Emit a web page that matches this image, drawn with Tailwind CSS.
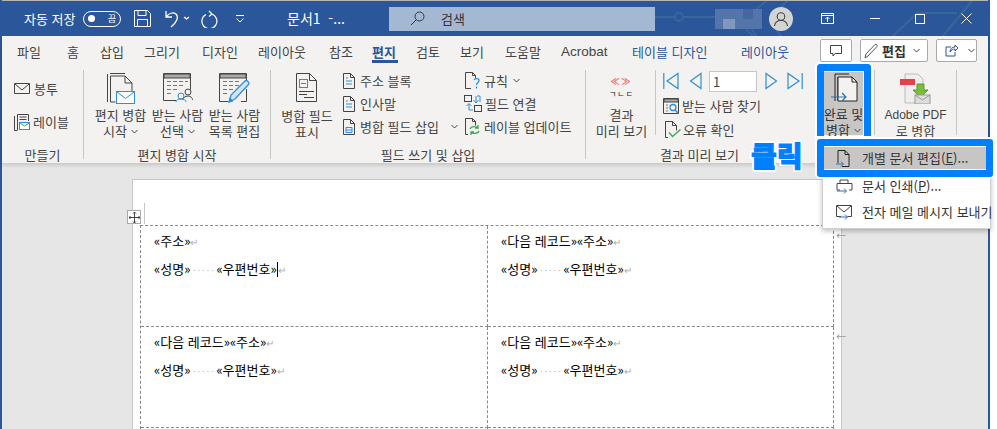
<!DOCTYPE html>
<html lang="ko">
<head>
  <meta charset="UTF-8" />
  <title>문서1 - Word</title>
  <script src="https://cdn.jsdelivr.net/npm/@tailwindcss/browser@4"></script>
</head>
<body class="bg-white text-[#444] font-['Noto_Sans_CJK_KR','Liberation_Sans',sans-serif]">
<div class="w-[997px] h-[429px] overflow-hidden">
<div class="relative w-[990px] h-[429px] bg-[#e6e6e6] border-x-2 border-x-[#2b579a]">

  <!-- title bar -->
  <div class="relative flex items-center h-[36px] bg-[#2b579a] border-t border-t-[#b5b5b5] text-white text-[13px] overflow-hidden">
    <svg class="absolute left-[640px] top-0" width="346" height="36" viewBox="0 0 346 36" fill="none" stroke="#3a659f" stroke-width="2"><path d="M0 16h32M42 16h50L112 36M125 0c-20 12-20 24-10 36M145 0c-14 12-14 24-6 36M250 36l25-24h40M330 0l-30 36"/><circle cx="37" cy="16" r="4"/></svg>
    <span class="relative ml-[22px] w-[52px] whitespace-nowrap">자동 저장</span>
    <div class="relative ml-[7px] w-[38px] h-[16px] rounded-full border border-white flex items-center justify-between px-[4px]">
      <span class="w-[7px] h-[7px] rounded-full bg-white"></span><span class="text-[9px]">끔</span>
    </div>
    <svg class="relative ml-[13px]" width="17" height="17" viewBox="0 0 17 17" fill="none" stroke="white"><path d="M.5.5h13l3 3v13H.5zM4 .5v5h8v-5M3.500 16.500v-7h10v7"/></svg>
    <svg class="relative ml-[13px]" width="26" height="18" viewBox="0 0 26 18" fill="none" stroke="white" stroke-width="1.300"><path d="M2 1v6h6M2 7c3-4 7-5 10-3 3 3 1 8-5 13"/><path d="M20 7l2.500 2 2.500-2"/></svg>
    <svg class="relative ml-[11px]" width="18" height="18" viewBox="0 0 18 18" fill="none" stroke="white" stroke-width="1.200"><path d="M8 1l3 3-3 2.500M10.500 4A7.500 7.500 0 1 1 5 4.500"/></svg>
    <svg class="relative ml-[16px]" width="10" height="8" viewBox="0 0 10 8" fill="none" stroke="white"><path d="M1 .5h8M1.500 3.500L5 7l3.500-3.500"/></svg>
    <span class="relative ml-[42px] text-[14px] w-[102px] whitespace-nowrap">문서1&nbsp; -...</span>
    <div class="relative w-[266px] h-[24px] bg-[#a5b8d3] flex items-center text-[#333] text-[13px]">
      <svg class="ml-[21px]" width="15" height="15" viewBox="0 0 15 15" fill="none" stroke="#333"><circle cx="9.500" cy="5.500" r="4.500"/><path d="M6 9l-5 5"/></svg>
      <span class="ml-[16px]">검색</span>
    </div>
    <div class="relative ml-[60px] w-[47px] h-[20px] bg-[#5375a9] flex">
      <span class="w-[12px] h-[10px] mt-[10px] ml-[8px] bg-[#7f98bf]"></span>
      <span class="w-[10px] h-[10px] ml-[8px] bg-[#46689e]"></span>
    </div>
    <div class="relative ml-[7px] w-[24px] h-[24px] rounded-full bg-[#d4d4d4] flex items-center justify-center">
      <svg width="16" height="16" viewBox="0 0 16 16" fill="none" stroke="#444" stroke-width="1.100"><circle cx="8" cy="5.500" r="3.800"/><path d="M1.500 15c.5-4 3-5.500 6.500-5.500s6 1.500 6.500 5.500"/></svg>
    </div>
    <svg class="relative ml-[28px]" width="13" height="11" viewBox="0 0 13 11" fill="none" stroke="white"><path d="M.5.500h12v10H.5zM.5 2.500h12M6.500 9V4.500M4.500 6l2-2 2 2"/></svg>
    <span class="relative ml-[36px] w-[10px] h-px bg-white"></span>
    <span class="relative ml-[35px] w-[10px] h-[10px] border border-white"></span>
    <svg class="relative ml-[36px]" width="11" height="11" viewBox="0 0 11 11" stroke="white"><path d="M.5.500l10 10M10.500.500l-10 10"/></svg>
  </div>

  <div class="bg-[#f3f2f1] h-[127px] shadow-[0_2px_4px_rgba(0,0,0,0.15)]">
    <!-- tabs -->
    <div class="flex items-start h-[26px] text-[13px] text-[#444] pl-[15px] leading-[32px] whitespace-nowrap">
      <span class="w-[50px]">파일</span>
      <span class="w-[33px]">홈</span>
      <span class="w-[44px]">삽입</span>
      <span class="w-[58px]">그리기</span>
      <span class="w-[56px]">디자인</span>
      <span class="w-[71px]">레이아웃</span>
      <span class="w-[43px]">참조</span>
      <span class="w-[44px] font-bold text-[#2b579a] relative">편지<i class="absolute left-0 top-[24px] w-[26px] h-[3px] bg-[#2b579a]"></i></span>
      <span class="w-[44px]">검토</span>
      <span class="w-[45px]">보기</span>
      <span class="w-[56px]">도움말</span>
      <span class="w-[71px] font-['Liberation_Sans',sans-serif] text-[13.500px]">Acrobat</span>
      <span class="w-[109px] text-[#2b579a]">테이블 디자인</span>
      <span class="w-[79px] text-[#2b579a]">레이아웃</span>
      <div class="flex items-center gap-[8px] mt-[3px] leading-none">
        <span class="w-[32px] h-[23px] bg-white border border-[#aaa] rounded-[2px] flex items-center justify-center">
          <svg width="12" height="12" viewBox="0 0 12 12" fill="none" stroke="#444"><path d="M.5.500h11v8H5l-2 2.500V8.500H.5z"/></svg>
        </span>
        <span class="w-[68px] h-[23px] bg-white border border-[#aaa] rounded-[2px] flex items-center gap-[2px] pl-[3px] font-bold text-[#333]">
          <svg width="16" height="16" viewBox="0 0 16 16" fill="none" stroke="#555"><path d="M1 15l1-4 9-9.500c1-1 3 1 2 2L4 13z"/></svg>편집
          <svg class="ml-[5px]" width="7" height="5" viewBox="0 0 7 5" fill="none" stroke="#444"><path d="M.5 1l3 3 3-3"/></svg>
        </span>
        <span class="w-[41px] h-[23px] bg-white border border-[#aaa] rounded-[2px] flex items-center pl-[8px] gap-[10px]">
          <svg width="13" height="13" viewBox="0 0 13 13" fill="none" stroke="#2b579a"><path d="M6 3H1v9h9V8M5 8c0-3 2-5 5-5V1l3 3-3 3V5C8 5 6 6 5 8z"/></svg>
          <svg width="7" height="5" viewBox="0 0 7 5" fill="none" stroke="#444"><path d="M.5 1l3 3 3-3"/></svg>
        </span>
      </div>
    </div>

    <!-- ribbon -->
    <div class="flex h-[101px] text-[13px] leading-[16px] text-[#444] whitespace-nowrap">

      <!-- 만들기 -->
      <div class="w-[82px] flex flex-col border-r border-r-[#c8c6c4] mt-[8px] mb-[4px]">
        <div class="flex-1 flex flex-col pl-[12px] pt-[9px] gap-[13px]">
          <div class="flex items-center gap-[3px] h-[20px]">
            <svg width="17" height="12" viewBox="0 0 17 12" fill="none" stroke="#444"><path d="M.5.500h15v10H.5zM1 1l7 6 7-6"/></svg>봉투
          </div>
          <div class="flex items-center gap-[3px] h-[20px]">
            <svg width="16" height="17" viewBox="0 0 16 17" fill="none" stroke="#444"><path d="M3.500 16V.5h11V7M.5 2v14.500h3M5.500 3h7M5.500 5.500h7"/><rect x="5.500" y="8.500" width="10" height="7" fill="#fff" stroke="#2e8fd6"/><path d="M6 9l4.500 3L15 9" stroke="#2e8fd6"/></svg>레이블
          </div>
        </div>
        <div class="h-[8px] leading-[8px] text-center">만들기</div>
      </div>

      <!-- 편지 병합 시작 -->
      <div class="w-[187px] flex flex-col border-r border-r-[#c8c6c4] mt-[8px] mb-[4px]">
        <div class="flex-1 flex pl-[8px]">
          <div class="w-[57px] flex flex-col items-center pt-[3px]">
            <svg class="shrink-0" width="28" height="31" viewBox="0 0 28 31" fill="none" stroke="#444"><path d="M.5 1v28M3 .5h15M3.500 3v26h5M3.500 3H18l7 7v8"/><path d="M18 3v7h7"/><rect x="9.500" y="18.500" width="18" height="12" fill="#fff" stroke="#2e8fd6"/><path d="M10 19l8.500 6.500L27 19" stroke="#2e8fd6"/></svg>
            <span class="mt-[3px]">편지 병합</span>
            <span class="flex items-center gap-[4px]">시작<svg width="7" height="5" viewBox="0 0 7 5" fill="none" stroke="#444"><path d="M.5 1l3 3 3-3"/></svg></span>
          </div>
          <div class="w-[57px] flex flex-col items-center pt-[3px]">
            <svg class="shrink-0" width="30" height="29" viewBox="0 0 30 29" fill="none" stroke="#444"><path d="M13 27.500H.5V.5h27v16"/><path d="M1 1h26v4H1z" fill="#aaa" stroke="#444"/><path d="M4 8.500h4M10 8.500h4M16 8.500h4M22 8.500h3M4 12.500h4M10 12.500h4M16 12.500h4M4 16.500h4M10 16.500h4M4 20.500h4" stroke="#777"/><circle cx="25" cy="19" r="3"/><path d="M20 27c0-2 2-4 5-4s4 2 5 4"/><circle cx="18" cy="23" r="3" stroke="#2e8fd6"/><path d="M13 29c0-2 2-3 5-3s5 1 5 3" stroke="#2e8fd6"/></svg>
            <span class="mt-[5px]">받는 사람</span>
            <span class="flex items-center gap-[4px]">선택<svg width="7" height="5" viewBox="0 0 7 5" fill="none" stroke="#444"><path d="M.5 1l3 3 3-3"/></svg></span>
          </div>
          <div class="w-[57px] flex flex-col items-center pt-[3px]">
            <svg class="shrink-0" width="31" height="30" viewBox="0 0 31 30" fill="none" stroke="#444"><path d="M9 28.500H.5V.5h27v8M27.500 16v12.500H22"/><path d="M1 1h26v4H1z" fill="#aaa" stroke="#444"/><path d="M4 8.500h4M10 8.500h4M16 8.500h4M4 12.500h4M10 12.500h4M16 12.500h4M4 16.500h4M10 16.500h4M4 20.500h4" stroke="#777"/><path d="M10 29l2-7L26 8c1.500-1.500 5 1.500 3.500 3.500L16 26z" fill="#cfe4f5" stroke="#2e8fd6" stroke-width="1.300"/><path d="M10 29l1-4 3 3z" fill="#2e8fd6" stroke="#2e8fd6"/></svg>
            <span class="mt-[4px]">받는 사람</span><span>목록 편집</span>
          </div>
        </div>
        <div class="h-[8px] leading-[8px] text-center">편지 병합 시작</div>
      </div>

      <!-- 필드 쓰기 및 삽입 -->
      <div class="w-[315px] flex flex-col border-r border-r-[#c8c6c4] mt-[8px] mb-[4px]">
        <div class="flex-1 flex">
          <div class="w-[72px] flex flex-col items-center pt-[3px]">
            <svg class="shrink-0" width="22" height="29" viewBox="0 0 22 29" fill="none" stroke="#444"><path d="M.5.500h13l7 7v21H.5zM13.500.5v7h7"/><rect x="3.500" y="6.500" width="8" height="8" stroke="#2e8fd6"/><path d="M5 10.500h5" stroke="#2e8fd6"/><path d="M3 18.500h15M3 21.500h8M8 24.500h10"/></svg>
            <span class="mt-[6px]">병합 필드</span><span>표시</span>
          </div>
          <div class="flex flex-col w-[122px] pt-[1px] gap-[4px]">
            <div class="flex items-center h-[19px] gap-[5px]">
              <svg width="12" height="16" viewBox="0 0 12 16" fill="none" stroke="#444"><path d="M.5.500h7l4 4v11H.5zM7.500.5v4h4"/><path d="M3 5h2M3 8h6M3 11h6" stroke="#2e8fd6"/></svg>주소 블록
            </div>
            <div class="flex items-center h-[19px] gap-[5px]">
              <svg width="12" height="16" viewBox="0 0 12 16" fill="none" stroke="#444"><path d="M.5.500h7l4 4v11H.5zM7.500.5v4h4"/><path d="M3 5h2M3 8h6M3 11h6" stroke="#2e8fd6"/></svg>인사말
            </div>
            <div class="flex items-center h-[19px] gap-[5px]">
              <svg width="12" height="16" viewBox="0 0 12 16" fill="none" stroke="#444"><path d="M.5.500h7l4 4v11H.5zM7.500.5v4h4"/><path d="M3 8.500h6v5H3zM3 11h6" stroke="#2e8fd6"/></svg>병합 필드 삽입
              <svg class="ml-[7px]" width="7" height="5" viewBox="0 0 7 5" fill="none" stroke="#444"><path d="M.5 1l3 3 3-3"/></svg>
            </div>
          </div>
          <div class="flex flex-col pt-[1px] gap-[4px]">
            <div class="flex items-center h-[19px] gap-[3px]">
              <svg width="16" height="17" viewBox="0 0 16 17" fill="none" stroke="#444"><path d="M6 16.500H.5V.5h7l3 3v3"/><path d="M7.500.5v3h3"/><path d="M9 8c1-2 5-2 5 .5 0 2-2.500 2-2.500 4.500M11.500 14.500v2" stroke="#2e8fd6" stroke-width="1.300"/></svg>규칙
              <svg class="ml-[2px]" width="7" height="5" viewBox="0 0 7 5" fill="none" stroke="#444"><path d="M.5 1l3 3 3-3"/></svg>
            </div>
            <div class="flex items-center h-[19px] gap-[3px] -ml-[1px]">
              <svg width="18" height="17" viewBox="0 0 18 17" fill="none" stroke="#444"><rect x=".5" y=".5" width="7" height="6"/><rect x="10.500" y="10.500" width="7" height="6"/><path d="M12 1v6M9.500 5l2.500 3 2.500-3M13 1h3v6M5 15V9M2.500 11L5 8.500 7.500 11M5 15h4" stroke="#2e8fd6"/></svg>필드 연결
            </div>
            <div class="flex items-center h-[19px] gap-[3px]">
              <svg width="16" height="17" viewBox="0 0 16 17" fill="none" stroke="#444"><path d="M3 16.500H.5V.5h7l3 3v4"/><path d="M7.500.5v3h3"/><path d="M5 11c1-3 6-3 8-1M13 7v3h-3M14 13c-1 3-6 3-8 1M6 17v-3h3" stroke="#3aa655" stroke-width="1.300"/></svg>레이블 업데이트
            </div>
          </div>
        </div>
        <div class="h-[8px] leading-[8px] text-center">필드 쓰기 및 삽입</div>
      </div>

      <!-- 결과 미리 보기 -->
      <div class="w-[238px] flex flex-col mt-[8px] mb-[4px]">
        <div class="flex flex-1">
          <div class="w-[70px] h-[65px] flex flex-col items-center pl-[2px] pt-[6px] border-r border-r-[#c8c6c4]">
            <span class="text-[9px] leading-[12px] text-[#e55] font-bold tracking-[2px]">≪≫</span>
            <span class="text-[8px] leading-[12px] tracking-[1px] text-[#222]">ㄱㄴㄷ</span>
            <span class="mt-[7px]">결과</span><span>미리 보기</span>
          </div>
          <div class="flex flex-col pl-[7px]">
            <div class="flex items-center h-[22px]">
              <svg width="16" height="18" viewBox="0 0 16 18" fill="none" stroke="#2e8fd6" stroke-width="1.200"><path d="M.8 1v16M15 1.500v15L4 9z"/></svg>
              <svg class="ml-[10px]" width="13" height="18" viewBox="0 0 13 18" fill="none" stroke="#2e8fd6" stroke-width="1.200"><path d="M12 1.500v15L1.500 9z"/></svg>
              <span class="ml-[7px] w-[48px] h-[21px] bg-white border border-[#c8c6c4] pl-[3px] text-[13px] leading-[19px]">1</span>
              <svg class="ml-[8px]" width="13" height="18" viewBox="0 0 13 18" fill="none" stroke="#2e8fd6" stroke-width="1.200"><path d="M1 1.500v15L11.500 9z"/></svg>
              <svg class="ml-[9px]" width="16" height="18" viewBox="0 0 16 18" fill="none" stroke="#2e8fd6" stroke-width="1.200"><path d="M15.200 1v16M1 1.500v15L12 9z"/></svg>
            </div>
            <div class="flex items-center h-[19px] gap-[3px] mt-[4px]">
              <svg width="16" height="16" viewBox="0 0 16 16" fill="none" stroke="#444"><path d="M.5 15.500V.5h15v15z"/><path d="M1 1h14v3H1z" fill="#aaa"/><path d="M3 7h2M3 10h2M3 13h2" stroke="#777"/><circle cx="10" cy="9.500" r="3" stroke="#2e8fd6" stroke-width="1.300"/><path d="M12 12l3 3" stroke="#2e8fd6" stroke-width="1.500"/></svg>받는 사람 찾기
            </div>
            <div class="flex items-center h-[19px] gap-[2px] mt-[5px] ml-[2px]">
              <svg width="16" height="17" viewBox="0 0 16 17" fill="none" stroke="#444"><path d="M3 16.500H.5V.5h7l4 4v5"/><path d="M7.500.5v4h4"/><path d="M4 11.500l3.500 4 8-7" stroke="#3aa655" stroke-width="1.300"/></svg>오류 확인
            </div>
          </div>
        </div>
        <div class="h-[8px] leading-[8px] pl-[74px]">결과 미리 보기</div>
      </div>

      <!-- 완료 및 병합 -->
      <div class="w-[39px] mt-[10px] pt-[1px] bg-[#c8c6c4] h-[63px] flex flex-col items-center text-[#333]">
        <svg class="shrink-0" width="28" height="29" viewBox="0 0 28 29" fill="none" stroke="#222"><path d="M5 28V1h14M8 4v24"/><path d="M8 4h14l5 5v19H8z" fill="#f3f2f1"/><path d="M22 4v5h5"/><path d="M1 24h15M12 20l4 4-4 4" stroke="#2e6fb0" stroke-width="1.200"/></svg>
        <span class="mt-[4px]">완료 및</span>
        <span class="flex items-center gap-[4px]">병합<svg width="7" height="5" viewBox="0 0 7 5" fill="none" stroke="#444"><path d="M.5 1l3 3 3-3"/></svg></span>
      </div>

      <!-- Adobe PDF -->
      <div class="w-[83px] h-[65px] mt-[8px] ml-[11px] flex flex-col items-center pt-[3px] border-x border-x-[#c8c6c4]">
        <svg class="shrink-0" width="32" height="31" viewBox="0 0 32 31" fill="none"><path d="M5 1h13l5 5v24H5z" fill="#eee" stroke="#bbb"/><rect x="0" y="6" width="15" height="6" fill="#e8404a"/><path d="M17 11h7v6h4l-7.500 8L13 17h4z" fill="#7dbb3c" stroke="#5f9a2b"/><rect x="15" y="22" width="15" height="9" fill="#ddd" stroke="#999"/><path d="M15 22l7.500 5L30 22" stroke="#999"/></svg>
        <span class="mt-[3px] font-['Liberation_Sans',sans-serif] text-[12px]">Adobe PDF</span><span>로 병합</span>
      </div>
    </div>
  </div>

  <!-- document -->
  <div class="ml-[130px] mt-[16px] w-[710px] h-[250px] bg-white border border-b-0 border-[#c8c6c4] relative text-[13px] leading-[14px] text-black whitespace-nowrap">
    <span class="absolute left-[-6px] top-[30px] w-[14px] h-[14px] bg-white border border-[#aaa] flex items-center justify-center">
      <svg class="shrink-0" width="11" height="11" viewBox="0 0 11 11" fill="none" stroke="#444"><path d="M5.500 0v11M0 5.500h11M4 1.500L5.500 0 7 1.500M4 9.500L5.500 11 7 9.500M1.500 4L0 5.500 1.500 7M9.500 4L11 5.500 9.500 7"/></svg>
    </span>
    <span class="absolute left-[11px] top-[23px] w-px h-[21px] bg-[#c8c6c4]"></span>
    <div class="ml-[7px] mt-[45px] w-[694px] grid grid-cols-[347px_346px] grid-rows-[101px_101px_1px] border-t border-l border-dashed border-[#888]">
      <div class="border-r border-b border-dashed border-[#888] pl-[13px] pt-[8px]">
        <p>«주소»<span class="text-[#aaa] text-[10px]">↵</span></p>
        <p class="mt-[13px]">«성명»<span class="inline-block w-[26px] text-center text-[#aaa] text-[8px]">· · · · ·</span>«우편번호»<span class="border-l border-black text-[#aaa] text-[10px]">↵</span></p>
      </div>
      <div class="relative border-r border-b border-dashed border-[#888] pl-[13px] pt-[8px]">
        <p>«다음 레코드»«주소»<span class="text-[#aaa] text-[10px]">↵</span></p>
        <p class="mt-[13px]">«성명»<span class="inline-block w-[26px] text-center text-[#aaa] text-[8px]">· · · · ·</span>«우편번호»<span class="text-[#aaa] text-[10px]">↵</span></p>
        <span class="absolute left-[348px] top-[3px] text-[#999] text-[10px]">←</span>
      </div>
      <div class="border-r border-b border-dashed border-[#888] pl-[13px] pt-[8px]">
        <p>«다음 레코드»«주소»<span class="text-[#aaa] text-[10px]">↵</span></p>
        <p class="mt-[13px]">«성명»<span class="inline-block w-[26px] text-center text-[#aaa] text-[8px]">· · · · ·</span>«우편번호»<span class="text-[#aaa] text-[10px]">↵</span></p>
      </div>
      <div class="relative border-r border-b border-dashed border-[#888] pl-[13px] pt-[8px]">
        <p>«다음 레코드»«주소»<span class="text-[#aaa] text-[10px]">↵</span></p>
        <p class="mt-[13px]">«성명»<span class="inline-block w-[26px] text-center text-[#aaa] text-[8px]">· · · · ·</span>«우편번호»<span class="text-[#aaa] text-[10px]">↵</span></p>
        <span class="absolute left-[348px] top-[3px] text-[#999] text-[10px]">←</span>
      </div>
      <div class="border-r border-dashed border-[#888]"></div>
      <div class="border-r border-dashed border-[#888]"></div>
    </div>
  </div>

  <!-- dropdown menu -->
  <div class="absolute left-[820px] top-[140px] w-[169px] h-[89px] bg-white border border-[#d0d0d0] shadow-[0_2px_5px_rgba(0,0,0,0.25)] text-[13px] text-[#333] whitespace-nowrap pt-[6px]">
    <div class="flex items-center h-[22px] ml-[1px] w-[163px] bg-[#c8c6c4]">
      <svg class="ml-[12px] shrink-0" width="14" height="17" viewBox="0 0 14 17" fill="none" stroke="#222"><path d="M2 13V.5h7l4 4v12H6"/><path d="M9 .5v4h4"/><path d="M0 14h7M5 11.500L7.500 14 5 16.500" stroke="#2e6fb0"/></svg>
      <span class="ml-[12px]">개별 문서 편집(<u>E</u>)...</span>
    </div>
    <div class="flex items-center h-[26px] mt-[4px]">
      <svg class="ml-[13px] shrink-0" width="17" height="15" viewBox="0 0 17 15" fill="none" stroke="#444"><path d="M4 4V1h8v3M1 11V4.500h15V11h-3M1 11h3"/><path d="M1 12h9M8 9.500l2.500 2.500L8 14.500" stroke="#2e6fb0"/></svg>
      <span class="ml-[9px]">문서 인쇄(<u>P</u>)...</span>
    </div>
    <div class="flex items-center h-[26px]">
      <svg class="ml-[13px] shrink-0" width="17" height="15" viewBox="0 0 17 15" fill="none" stroke="#444"><path d="M5 11.500H.5V.5h15v11h-4M1 1l7 6 7-6"/><path d="M3 12h8M9 9.500l2.500 2.500L9 14.500" stroke="#2e6fb0"/></svg>
      <span class="ml-[9px]">전자 메일 메시지 보내기</span>
    </div>
  </div>

  <!-- callouts -->
  <div class="absolute left-[815px] top-[64px] w-[54px] h-[72px] border-[7px] border-b-0 border-[#0080ff] rounded-t-[4px] shadow-[0_0_0_2px_white]"></div>
  <div class="absolute left-[815px] top-[139px] w-[176px] h-[38px] border-[7px] border-[#0080ff] rounded-[3px] shadow-[0_0_0_2px_white]"></div>
  <span class="absolute left-[749px] top-[137px] text-[28px] leading-[36px] font-black text-[#0080ff] [-webkit-text-stroke:1px_#0080ff] [text-shadow:2px_0_white,-2px_0_white,0_2px_white,0_-2px_white,2px_2px_white,-2px_-2px_white,2px_-2px_white,-2px_2px_white]">클릭</span>
</div>
</div>
</body>
</html>
